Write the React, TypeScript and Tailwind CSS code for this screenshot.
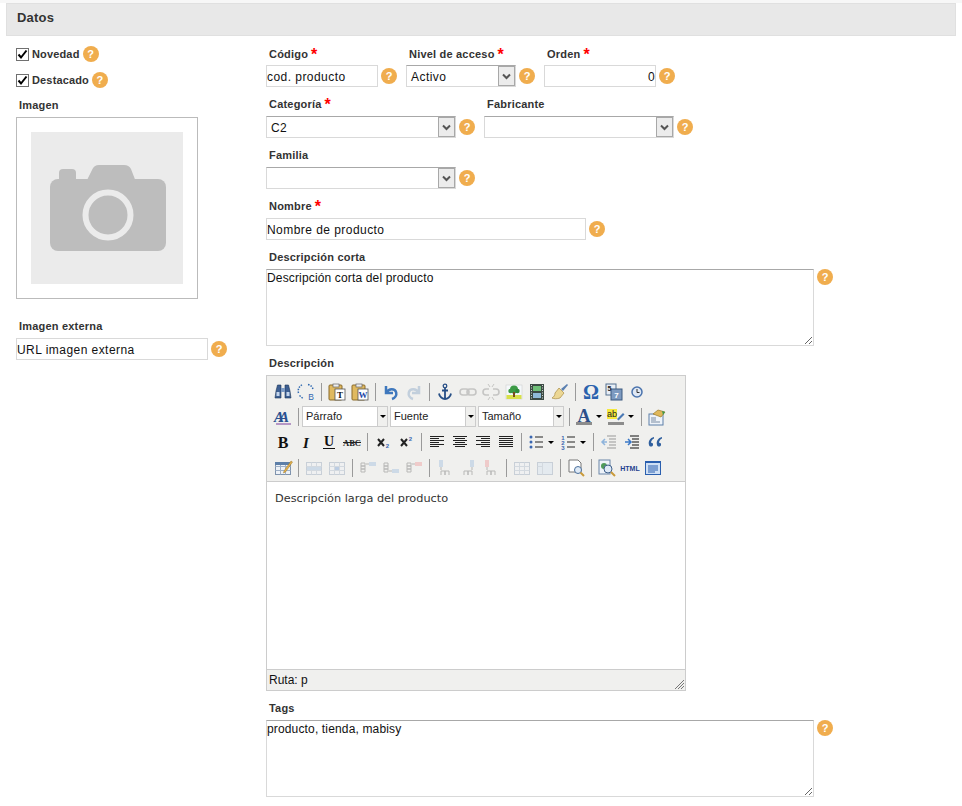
import type { ReactNode } from "react";

const sans = "font-['Liberation_Sans',Arial,sans-serif]";

function Ic({ children, off }: { children: ReactNode; off?: boolean }) {
  return (
    <svg width="20" height="20" viewBox="0 0 20 20" fill="none" className={off ? "opacity-35" : ""}>
      {children}
    </svg>
  );
}

function Lines({ rows }: { rows: [number, number][] }) {
  return (
    <>
      {rows.map(([x, w], i) => (
        <rect key={i} x={x} y={4 + i * 2} width={w} height="1" fill="#222" />
      ))}
    </>
  );
}

function Clip({ letter, color }: { letter: string; color: string }) {
  return (
    <>
      <rect x="2" y="3" width="13" height="15" rx="1" fill="#e0b95f" stroke="#8a6a2a" />
      <rect x="6" y="2" width="6" height="3" fill="#eee" stroke="#666" strokeWidth=".7" />
      <rect x="8" y="7" width="10" height="11" fill="#fff" stroke="#555" strokeWidth=".8" />
      <text x="13" y="16" textAnchor="middle" fontSize="9" fontWeight="700" fontFamily="Liberation Serif, serif" fill={color}>
        {letter}
      </text>
    </>
  );
}

function TableBase({ tint }: { tint?: string }) {
  return (
    <>
      <rect x="2.5" y="4.5" width="15" height="12" fill="#eef2f7" stroke="#7f93ad" />
      <path d="M2.5 8.5h15M2.5 12.5h15M7.5 4.5v12M12.5 4.5v12" stroke="#9fb0c6" />
      {tint && <rect x="8" y="9" width="4" height="3" fill={tint} />}
    </>
  );
}

function RowIcon({ flip, red }: { flip?: boolean; red?: boolean }) {
  return (
    <Ic off>
      <path d="M3 5h4v3H3zM3 8h4v3H3zM3 11h4v3H3z" stroke="#555" />
      <rect x="11" y={flip ? 11 : 4} width="7" height="4" fill={red ? "#e88" : "#8fb4dc"} />
      <path d={flip ? "M8 13h3" : "M8 6h3"} stroke="#555" />
    </Ic>
  );
}

function ColIcon({ right, red }: { right?: boolean; red?: boolean }) {
  return (
    <Ic off>
      <rect x={right ? 12 : 4} y="2" width="4" height="7" fill={red ? "#e88" : "#8fb4dc"} />
      <path d={right ? "M14 9v3" : "M6 9v3"} stroke="#555" />
      <path d="M6 17v-4h4v4M10 17v-4h4v4" stroke="#555" />
    </Ic>
  );
}

const icons: Record<string, ReactNode> = {
  find: (
    <Ic>
      <path d="M3 9l1.500-6h3.500v13H2zM17 9l-1.500-6H12v13h6z" fill="#3d5f92" stroke="#1d3557" strokeWidth=".6" />
      <rect x="8" y="6" width="4" height="4" fill="#7f9cc4" />
      <rect x="3.500" y="10" width="3" height="4" fill="#c3d5ec" />
      <rect x="13.500" y="10" width="3" height="4" fill="#c3d5ec" />
    </Ic>
  ),
  replace: (
    <Ic>
      <path d="M2.500 11C1.500 7 3.500 3.500 7 2.500M12 2.500c3 .5 5 3 5 5.500M3.500 13.500l4 3.500" stroke="#2f68b0" strokeWidth="1.500" strokeDasharray="1.500 1.200" />
      <text x="15" y="18" textAnchor="middle" fontSize="8.500" fontFamily="Liberation Sans, sans-serif" fill="#2f68b0">
        B
      </text>
    </Ic>
  ),
  pastetext: <Ic><Clip letter="T" color="#111" /></Ic>,
  pasteword: <Ic><Clip letter="W" color="#1f49a8" /></Ic>,
  undo: (
    <Ic>
      <path d="M5 4v7h7M5.500 10.500C8 6 14 6.500 15.200 10.500c.6 2.500-1 5.500-4.200 6.500" stroke="#3f78bd" strokeWidth="2.500" />
    </Ic>
  ),
  redo: (
    <Ic off>
      <path d="M15 4v7H8M14.500 10.500C12 6 6 6.500 4.800 10.500c-.6 2.500 1 5.500 4.200 6.500" stroke="#6f93bd" strokeWidth="2.500" />
    </Ic>
  ),
  anchor: (
    <Ic>
      <circle cx="10" cy="4" r="1.800" stroke="#274f86" strokeWidth="1.300" />
      <path d="M10 6v11M7 8.500h6M4 11.500c.5 3.500 3.500 5.500 6 5.500s5.500-2 6-5.500" stroke="#274f86" strokeWidth="1.800" />
    </Ic>
  ),
  link: (
    <Ic off>
      <rect x="2" y="7" width="9" height="6" rx="3" stroke="#777" strokeWidth="1.600" />
      <rect x="9" y="7" width="9" height="6" rx="3" stroke="#777" strokeWidth="1.600" />
    </Ic>
  ),
  unlink: (
    <Ic off>
      <path d="M8 7H5a3 3 0 000 6h3M12 7h3a3 3 0 010 6h-3" stroke="#777" strokeWidth="1.600" />
      <path d="M7 2l2 3M13 2l-2 3M7 18l2-3M13 18l-2-3" stroke="#777" />
    </Ic>
  ),
  image: (
    <Ic>
      <rect x="2" y="3" width="16" height="14" fill="#f4f8fa" stroke="#d0d0d0" strokeWidth=".6" />
      <rect x="2.500" y="13" width="15" height="4" fill="#d8e04a" />
      <circle cx="10" cy="7.500" r="4" fill="#3c9a45" />
      <circle cx="6.500" cy="9" r="2.200" fill="#3c9a45" />
      <circle cx="13.500" cy="9" r="2.200" fill="#2f8a3a" />
      <rect x="9" y="10" width="2" height="5" fill="#7a4a20" />
    </Ic>
  ),
  media: (
    <Ic>
      <rect x="3" y="2" width="14" height="16" fill="#3c4a44" />
      <rect x="6" y="4" width="8" height="5" fill="#6fbf78" />
      <rect x="6" y="11" width="8" height="5" fill="#8fbad8" />
      <path d="M4.500 3v14M15.500 3v14" stroke="#cfd6d0" strokeDasharray="1 1.500" />
    </Ic>
  ),
  cleanup: (
    <Ic>
      <path d="M11 7l6-5 1 1-5 6z" fill="#5a7fb0" />
      <path d="M9 6l5 5-4 5c-3 1-6 1-8 0 2-1 3-3 3-5z" fill="#ecd794" stroke="#a88b42" strokeWidth=".7" />
    </Ic>
  ),
  omega: (
    <Ic>
      <text x="10" y="17" textAnchor="middle" fontSize="20" fontWeight="700" fontFamily="Liberation Serif, serif" fill="#2a62ad">
        Ω
      </text>
    </Ic>
  ),
  date: (
    <Ic>
      <rect x="2" y="2" width="10" height="11" fill="#e8eef6" stroke="#55708f" />
      <rect x="7" y="7" width="11" height="11" fill="#7d9ac0" stroke="#3c5a80" />
      <text x="5.500" y="9" textAnchor="middle" fontSize="7" fontWeight="700" fontFamily="Liberation Sans, sans-serif" fill="#222">
        5
      </text>
      <text x="12.500" y="16" textAnchor="middle" fontSize="8" fontWeight="700" fontFamily="Liberation Sans, sans-serif" fill="#fff">
        7
      </text>
    </Ic>
  ),
  time: (
    <Ic>
      <circle cx="10" cy="10" r="5" fill="#dfe8f4" stroke="#4a73ad" strokeWidth="1.500" />
      <path d="M10 7v3.500h2.500" stroke="#333" />
    </Ic>
  ),
  styles: (
    <Ic>
      <text x="1" y="15" letterSpacing="-5" fontSize="15" fontStyle="italic" fontWeight="700" fontFamily="Liberation Serif, serif" fill="#2a4f90">
        AA
      </text>
      <path d="M3 17h15" stroke="#7a3f9c" />
    </Ic>
  ),
  forecolor: (
    <Ic>
      <text x="10" y="14.500" textAnchor="middle" fontSize="18" fontWeight="700" fontFamily="Liberation Serif, serif" fill="#2a4f8a">
        A
      </text>
      <rect x="2" y="15" width="16" height="3" fill="#8c8c8c" />
    </Ic>
  ),
  backcolor: (
    <Ic>
      <rect x="1" y="2" width="10" height="10" fill="#f4e83c" />
      <text x="6" y="10" textAnchor="middle" fontSize="9" fontFamily="Liberation Sans, sans-serif" fill="#222">
        ab
      </text>
      <path d="M11 12l6-6 1.500 1.500-6 6z" fill="#4a79b5" />
      <rect x="2" y="15" width="16" height="3" fill="#8c8c8c" />
    </Ic>
  ),
  template: (
    <Ic>
      <rect x="2" y="7" width="14" height="11" fill="#eef3f9" stroke="#5d7fa8" />
      <path d="M4 11h5M4 13h5M4 15h9" stroke="#7a8ca3" />
      <path d="M6 7l5-4 7 2-4 5z" fill="#e0b85a" stroke="#9c7a2a" strokeWidth=".7" />
      <path d="M15 4l3 1-2 3z" fill="#3d9a4a" />
    </Ic>
  ),
  bold: (
    <Ic>
      <text x="10" y="15.500" textAnchor="middle" fontSize="16" fontWeight="700" fontFamily="Liberation Serif, serif" fill="#111">
        B
      </text>
    </Ic>
  ),
  italic: (
    <Ic>
      <text x="10" y="15.500" textAnchor="middle" fontSize="15" fontStyle="italic" fontWeight="700" fontFamily="Liberation Serif, serif" fill="#111">
        I
      </text>
    </Ic>
  ),
  underline: (
    <Ic>
      <text x="10" y="14" textAnchor="middle" fontSize="14" fontWeight="700" fontFamily="Liberation Serif, serif" fill="#111">
        U
      </text>
      <path d="M4 16.500h12" stroke="#111" />
    </Ic>
  ),
  strike: (
    <Ic>
      <text x="10" y="13.500" textAnchor="middle" fontSize="8.500" fontWeight="700" fontFamily="Liberation Serif, serif" fill="#222">
        ABC
      </text>
      <path d="M1 10.500h18" stroke="#222" />
    </Ic>
  ),
  sub: (
    <Ic>
      <path d="M5 7l6 7M11 7l-6 7" stroke="#222" strokeWidth="2" />
      <text x="14.500" y="16" textAnchor="middle" fontSize="6" fontWeight="700" fontFamily="Liberation Sans, sans-serif" fill="#3a66b0">
        2
      </text>
    </Ic>
  ),
  sup: (
    <Ic>
      <path d="M5 7l6 7M11 7l-6 7" stroke="#222" strokeWidth="2" />
      <text x="14.500" y="9" textAnchor="middle" fontSize="6" fontWeight="700" fontFamily="Liberation Sans, sans-serif" fill="#3a66b0">
        2
      </text>
    </Ic>
  ),
  left: <Ic><Lines rows={[[3, 14], [3, 9], [3, 14], [3, 9], [3, 14], [3, 9]]} /></Ic>,
  center: <Ic><Lines rows={[[3, 14], [5, 10], [3, 14], [5, 10], [3, 14], [5, 10]]} /></Ic>,
  right: <Ic><Lines rows={[[3, 14], [8, 9], [3, 14], [8, 9], [3, 14], [8, 9]]} /></Ic>,
  full: <Ic><Lines rows={[[3, 14], [3, 14], [3, 14], [3, 14], [3, 14], [3, 14]]} /></Ic>,
  bullist: (
    <Ic>
      <circle cx="5" cy="5" r="1.500" fill="#3a66b0" />
      <circle cx="5" cy="10" r="1.500" fill="#3a66b0" />
      <circle cx="5" cy="15" r="1.500" fill="#3a66b0" />
      <path d="M9 5h8M9 10h8M9 15h8" stroke="#222" />
    </Ic>
  ),
  numlist: (
    <Ic>
      <text x="5" y="8" textAnchor="middle" fontSize="6" fontWeight="700" fontFamily="Liberation Sans, sans-serif" fill="#3a66b0">
        1
      </text>
      <text x="5" y="13" textAnchor="middle" fontSize="6" fontWeight="700" fontFamily="Liberation Sans, sans-serif" fill="#3a66b0">
        2
      </text>
      <text x="5" y="18" textAnchor="middle" fontSize="6" fontWeight="700" fontFamily="Liberation Sans, sans-serif" fill="#3a66b0">
        3
      </text>
      <path d="M9 5h8M9 10h8M9 15h8" stroke="#222" />
    </Ic>
  ),
  outdent: (
    <Ic>
      <path d="M8 4h9M10 7h7M10 10h7M10 13h7M8 16h9" stroke="#999" />
      <path d="M8 10H3M6 7l-3 3 3 3" stroke="#8fb4dc" strokeWidth="1.500" />
    </Ic>
  ),
  indent: (
    <Ic>
      <path d="M8 4h9M10 7h7M10 10h7M10 13h7M8 16h9" stroke="#111" />
      <path d="M3 10h5M6 7l3 3-3 3" stroke="#3a78c8" strokeWidth="1.500" />
    </Ic>
  ),
  quote: (
    <Ic>
      <path d="M9 5C5 6 3 9 4 13c.5 2 3.500 2 4 0 .3-1.500-1-2.500-2-2 0-2 1-3.500 3-4.500zM17 5c-4 1-6 4-5 8 .5 2 3.500 2 4 0 .3-1.500-1-2.500-2-2 0-2 1-3.500 3-4.500z" fill="#2f5f9e" />
    </Ic>
  ),
  tableedit: (
    <Ic>
      <TableBase />
      <path d="M2 4h16v3H2z" fill="#5d7fa8" />
      <path d="M11 13l7-10 1.500 1-7 10-2 1z" fill="#e7b14a" stroke="#9c7a2a" strokeWidth=".5" />
    </Ic>
  ),
  rowprops: <Ic off><TableBase /><rect x="3" y="9" width="14" height="3" fill="#8fb4dc" /></Ic>,
  cellprops: <Ic off><TableBase tint="#5d8fd0" /></Ic>,
  rowbefore: <RowIcon />,
  rowafter: <RowIcon flip />,
  rowdel: <RowIcon red />,
  colbefore: <ColIcon />,
  colafter: <ColIcon right />,
  coldel: <ColIcon red />,
  split: <Ic off><TableBase /></Ic>,
  merge: (
    <Ic off>
      <rect x="2.500" y="4.500" width="15" height="12" fill="#cfe0f2" stroke="#7f93ad" />
      <path d="M2.500 8.500h5M7.500 4.500v12" stroke="#9fb0c6" />
    </Ic>
  ),
  visual: (
    <Ic>
      <path d="M3 2h9l3 3v9H3z" fill="#fff" stroke="#777" />
      <circle cx="12" cy="12" r="3.500" fill="#dfeaf6" stroke="#4a6f9c" />
      <path d="M14.500 14.500l3.500 3.500" stroke="#c99a3a" strokeWidth="2" />
    </Ic>
  ),
  preview: (
    <Ic>
      <rect x="2" y="2" width="11" height="14" fill="#eef3f9" stroke="#6b86a8" />
      <circle cx="7" cy="8" r="3" fill="#4f9a5a" />
      <circle cx="11" cy="11" r="4" fill="#dfeaf6" stroke="#3e5f8a" />
      <path d="M14 14l4 4" stroke="#c99a3a" strokeWidth="2" />
    </Ic>
  ),
  html: (
    <Ic>
      <text x="10" y="13" textAnchor="middle" fontSize="7" fontWeight="700" fontFamily="Liberation Sans, sans-serif" fill="#1f3f8f">
        HTML
      </text>
    </Ic>
  ),
  code: (
    <Ic>
      <rect x="2.500" y="3.500" width="15" height="13" fill="#cfe0f5" stroke="#2a5fae" />
      <rect x="3" y="4" width="14" height="1" fill="#2a5fae" />
      <path d="M5 8h10M5 10h10M5 12h10M5 14h7" stroke="#2a5fae" />
    </Ic>
  ),
};

function Btn({ name }: { name: string }) {
  return <div className="flex w-[23px] justify-center">{icons[name]}</div>;
}

function Sep() {
  return (
    <div className="flex w-[8px] justify-center">
      <div className="h-[18px] w-px bg-[#9a9a9a]" />
    </div>
  );
}

function Split({ name }: { name: string }) {
  return (
    <div className="flex w-[32px] items-center">
      <div className="ml-px flex w-[20px] justify-center">{icons[name]}</div>
      <div className="ml-[2px] h-0 w-0 border-x-[3px] border-t-[3px] border-x-transparent border-t-black" />
    </div>
  );
}

function ToolSelect({ value }: { value: string }) {
  return (
    <div className="flex h-[21px] w-[86px] border border-[#cccccc] bg-white">
      <span className={`flex-1 pl-[3px] text-[11px] leading-[19px] text-[#222] ${sans}`}>{value}</span>
      <div className="flex w-[10px] items-center justify-center border-l border-[#cccccc] bg-[#f0f0ee]">
        <div className="h-0 w-0 border-x-[3px] border-t-[3px] border-x-transparent border-t-black" />
      </div>
    </div>
  );
}

function Row({ items, className }: { items: string[]; className: string }) {
  return (
    <div className={`flex items-center ${className}`}>
      {items.map((n, i) => (n === "|" ? <Sep key={i} /> : <Btn key={i} name={n} />))}
    </div>
  );
}

function Help({ className = "" }: { className?: string }) {
  return (
    <span className={`flex h-4 w-4 shrink-0 items-center justify-center rounded-full bg-[#f0ad4e] text-[11px] font-bold leading-none text-white ${sans} ${className}`}>
      ?
    </span>
  );
}

function Label({ text, req, className = "" }: { text: string; req?: boolean; className?: string }) {
  return (
    <div className={`flex h-[14px] items-center text-[11px] font-bold leading-[14px] tracking-[0.2px] text-[#333] ${sans} ${className}`}>
      {text}
      {req && <span className="ml-[3px] mt-[1px] text-[16px] font-bold leading-[14px] text-[#ff0000]">*</span>}
    </div>
  );
}

const inputCls = `h-[22px] border border-[#d9d9d9] bg-white px-0 pt-px text-[12px] leading-[20px] tracking-[0.45px] text-[#111] outline-none ${sans}`;
const areaCls = `block h-[77px] w-[548px] resize border border-[#d9d9d9] border-t-[#a8a8a8] bg-white p-0 pt-px text-[12px] leading-[14px] tracking-[0.15px] text-[#111] outline-none ${sans}`;

function Select({ value, width }: { value?: string; width: string }) {
  return (
    <div className={`flex h-[22px] border border-[#d9d9d9] border-t-[#a8a8a8] bg-white ${width}`}>
      <span className={`flex-1 pl-1 pt-px text-[12px] leading-[20px] tracking-[0.45px] text-[#111] ${sans}`}>{value}</span>
      <div className="flex h-[20px] w-[17px] items-center justify-center border border-[#a8a8a8] bg-[#ececec]">
        <svg width="9" height="7" viewBox="0 0 9 7" fill="none">
          <path d="M1 1.500l3.500 3.500L8 1.500" stroke="#555" strokeWidth="2" />
        </svg>
      </div>
    </div>
  );
}

function Check({ text }: { text: string }) {
  return (
    <div className="flex h-[13px] items-center">
      <span className="flex h-[13px] w-[13px] items-center justify-center border border-[#707070] bg-white">
        <svg width="11" height="11" viewBox="0 0 11 11" fill="none">
          <path d="M1.500 5.500l2.500 3L9.500 1.500" stroke="#000" strokeWidth="2" />
        </svg>
      </span>
      <span className={`ml-[3px] mr-[3px] text-[11px] font-bold tracking-[0.15px] text-[#333] ${sans}`}>{text}</span>
      <Help className="-mt-px" />
    </div>
  );
}

export default function App() {
  return (
    <div className="h-[806px] w-[962px] overflow-hidden bg-white">
      <div className="h-[3px] bg-[#f7f7f7]" />
      <div className="mx-[6px] h-[33px] border border-[#e0e0e0] bg-[#e8e8e8] pl-[10px]">
        <div className={`pt-[6px] text-[13px] font-bold leading-[16px] tracking-[0.2px] text-[#333] ${sans}`}>Datos</div>
      </div>

      <div className="flex">
        {/* columna izquierda */}
        <div className="w-[266px] shrink-0 pl-4">
          <div className="flex flex-col gap-[13px] pt-3">
            <Check text="Novedad" />
            <Check text="Destacado" />
          </div>
          <Label text="Imagen" className="ml-[3px] mt-[11px]" />
          <div className="mt-[5px] flex h-[182px] w-[182px] items-center justify-center border border-[#bbbbbb]">
            <div className="flex h-[152px] w-[152px] items-center justify-center bg-[#ebebeb]">
              <svg width="152" height="152" viewBox="0 0 152 152" fill="none">
                <rect x="28" y="37" width="17" height="16" rx="4" fill="#bdbdbd" />
                <path d="M55 50l6-12q2-5 7-5h25q5 0 7 4l5 13z" fill="#bdbdbd" />
                <rect x="19" y="47" width="116" height="72" rx="8" fill="#bdbdbd" />
                <circle cx="77" cy="83" r="22.500" fill="#bdbdbd" stroke="#ebebeb" strokeWidth="6" />
              </svg>
            </div>
          </div>
          <Label text="Imagen externa" className="ml-[3px] mt-[20px]" />
          <div className="mt-[5px] flex items-center gap-[3px]">
            <input className={`${inputCls} w-[192px]`} defaultValue="URL imagen externa" />
            <Help />
          </div>
        </div>

        {/* columna derecha */}
        <div className="flex-1 pt-[11px]">
          <div className="flex">
            <div className="w-[140px]">
              <Label text="Código" req className="ml-[3px]" />
              <div className="mt-[4px] flex items-center gap-[3px]">
                <input className={`${inputCls} w-[112px]`} defaultValue="cod. producto" />
                <Help />
              </div>
            </div>
            <div className="w-[138px]">
              <Label text="Nivel de acceso" req className="ml-[3px]" />
              <div className="mt-[4px] flex items-center gap-[3px]">
                <Select value="Activo" width="w-[110px]" />
                <Help />
              </div>
            </div>
            <div>
              <Label text="Orden" req className="ml-[3px]" />
              <div className="mt-[4px] flex items-center gap-[3px]">
                <input className={`${inputCls} w-[112px] text-right`} defaultValue="0" />
                <Help />
              </div>
            </div>
          </div>

          <div className="mt-[10px] flex">
            <div className="w-[218px]">
              <Label text="Categoría" req className="ml-[3px]" />
              <div className="mt-[5px] flex items-center gap-[3px]">
                <Select value="C2" width="w-[190px]" />
                <Help />
              </div>
            </div>
            <div>
              <Label text="Fabricante" className="ml-[3px]" />
              <div className="mt-[5px] flex items-center gap-[3px]">
                <Select width="w-[190px]" />
                <Help />
              </div>
            </div>
          </div>

          <Label text="Familia" className="ml-[3px] mt-[10px]" />
          <div className="mt-[5px] flex items-center gap-[3px]">
            <Select width="w-[190px]" />
            <Help />
          </div>

          <Label text="Nombre" req className="ml-[3px] mt-[10px]" />
          <div className="mt-[5px] flex items-center gap-[3px]">
            <input className={`${inputCls} w-[320px]`} defaultValue="Nombre de producto" />
            <Help />
          </div>

          <Label text="Descripción corta" className="ml-[3px] mt-[10px]" />
          <div className="mt-[5px] flex items-start gap-[3px]">
            <textarea className={areaCls} defaultValue="Descripción corta del producto" />
            <Help />
          </div>

          <Label text="Descripción" className="ml-[3px] mt-[10px]" />
          <div className="mt-[5px] w-[420px] border border-[#cccccc] bg-[#f0f0ee]">
            <div className="h-[106px] border-b border-[#cccccc] pl-1 pt-[3px]">
              <Row
                className="h-[25px]"
                items={["find", "replace", "|", "pastetext", "pasteword", "|", "undo", "redo", "|", "anchor", "link", "unlink", "image", "media", "cleanup", "|", "omega", "date", "time"]}
              />
              <div className="flex h-[25px] items-center">
                <Btn name="styles" />
                <Sep />
                <div className="flex gap-[2px]">
                  <ToolSelect value="Párrafo" />
                  <ToolSelect value="Fuente" />
                  <ToolSelect value="Tamaño" />
                </div>
                <div className="ml-[1px]">
                  <Sep />
                </div>
                <Split name="forecolor" />
                <Split name="backcolor" />
                <Sep />
                <Btn name="template" />
              </div>
              <div className="flex h-[26px] items-center">
                <Row className="h-[26px]" items={["bold", "italic", "underline", "strike", "|", "sub", "sup", "|", "left", "center", "right", "full", "|"]} />
                <Split name="bullist" />
                <Split name="numlist" />
                <Row className="h-[26px]" items={["|", "outdent", "indent", "quote"]} />
              </div>
              <Row
                className="h-[26px]"
                items={["tableedit", "|", "rowprops", "cellprops", "|", "rowbefore", "rowafter", "rowdel", "|", "colbefore", "colafter", "coldel", "|", "split", "merge", "|", "visual", "|", "preview", "html", "code"]}
              />
            </div>
            <div className="h-[187px] bg-white pl-2 pt-[10px] font-['DejaVu_Sans',Verdana,sans-serif] text-[11.300px] leading-[14px] text-[#333]">
              Descripción larga del producto
            </div>
            <div className={`relative h-[21px] border-t border-[#cccccc] pl-[2px] text-[12px] leading-[21px] text-[#111] ${sans}`}>
              Ruta: p
              <svg className="absolute bottom-0 right-0" width="12" height="12" viewBox="0 0 12 12" fill="none">
                <path d="M11 2L2 11M11 5l-6 6M11 8l-3 3" stroke="#777" />
              </svg>
            </div>
          </div>

          <Label text="Tags" className="ml-[3px] mt-[10px]" />
          <div className="mt-[5px] flex items-start gap-[3px]">
            <textarea className={areaCls} defaultValue="producto, tienda, mabisy" />
            <Help />
          </div>
        </div>
      </div>
    </div>
  );
}
